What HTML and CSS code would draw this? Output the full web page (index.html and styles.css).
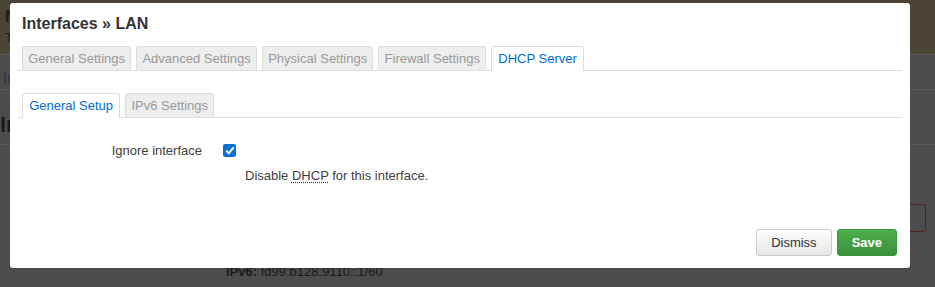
FILE: index.html
```html
<!DOCTYPE html>
<html lang="en">
<head>
    <meta charset="UTF-8">
    <title>Interfaces - LAN</title>
    <link rel="stylesheet" href="styles.css">
</head>
<body>
    <div class="page">
        <div class="alert">
            <h4>No password set!</h4>
            <p>There is no password set on this router.</p>
        </div>
        <div class="crumbs"><a href="#">Interfaces</a></div>
        <div class="page-title">Interfaces</div>
        <div class="page-body">
            <div class="red-box"></div>
            <div class="addr"><strong>IPv6:</strong> fd99:b128:9110::1/60</div>
        </div>
    </div>

    <div class="modal-overlay">
        <div class="modal">
            <h4 class="modal-title">Interfaces &raquo; LAN</h4>

            <ul class="tabs">
                <li class="tab">General Settings</li>
                <li class="tab">Advanced Settings</li>
                <li class="tab">Physical Settings</li>
                <li class="tab">Firewall Settings</li>
                <li class="tab active">DHCP Server</li>
            </ul>

            <ul class="tabs sub">
                <li class="tab active">General Setup</li>
                <li class="tab">IPv6 Settings</li>
            </ul>

            <div class="form-row">
                <label class="form-label">Ignore interface</label>
                <div class="form-field">
                    <span class="check">
                        <svg width="10" height="9" viewBox="0 0 10 9"><path d="M1.2 4.6 L3.8 7.2 L8.8 1.4" fill="none" stroke="#fff" stroke-width="2"/></svg>
                    </span>
                </div>
            </div>
            <div class="form-desc">Disable <abbr title="Dynamic Host Configuration Protocol">DHCP</abbr> for this interface.</div>

            <div class="modal-actions">
                <button class="btn">Dismiss</button>
                <button class="btn btn-save">Save</button>
            </div>
        </div>
    </div>
</body>
</html>
```

FILE: styles.css
```css
body {
    margin: 0;
    font-family: "Liberation Sans", Arial, sans-serif;
    font-size: 13px;
    background: #4c4c4c;
    width: 935px;
    height: 287px;
    overflow: hidden;
    position: relative;
}

/* dimmed page behind the dialog */
.page { color: #1b1b1b; }
.alert {
    height: 55px;
    background: #4a4535;
    padding: 7px 5px 0;
    box-sizing: border-box;
    border-bottom: 1px solid #5a5a5a;
}
.alert h4 { margin: 0; font-size: 17px; line-height: 20px; }
.alert p { margin: 3px 0 0; font-size: 13px; }
.crumbs {
    height: 35px;
    padding: 15px 0 0 3px;
    box-sizing: border-box;
    border-bottom: 1px solid #5a5a5a;
    font-size: 14px;
}
.crumbs a { color: #1d3550; text-decoration: none; }
.page-title {
    height: 55px;
    padding: 22px 0 0 0;
    box-sizing: border-box;
    border-bottom: 1px solid #5a5a5a;
    font-size: 22px;
    font-weight: bold;
}
.page-body { position: relative; height: 142px; }
.red-box {
    position: absolute;
    left: 880px;
    top: 59px;
    width: 44px;
    height: 26px;
    border: 1px solid #5c1d1d;
    border-radius: 3px;
}
.addr {
    position: absolute;
    left: 226px;
    top: 119px;
    font-size: 13px;
    color: #1a1a1a;
}

/* dialog */
.modal-overlay {
    position: absolute;
    inset: 0;
}
.modal {
    position: absolute;
    left: 10px;
    top: 3px;
    width: 900px;
    height: 265px;
    background: #fff;
    border-radius: 3px;
    padding: 12px 8px 0 8px;
    box-sizing: border-box;
    color: #404040;
}
.modal-title {
    margin: 0 0 13px 4px;
    font-size: 16px;
    line-height: 18px;
    font-weight: bold;
    color: #333;
}

.tabs {
    list-style: none;
    margin: 0;
    padding: 0 0 0 4px;
    display: flex;
    gap: 5px;
    border-bottom: 1px solid #ddd;
}
.tab {
    padding: 0 5.2px;
    height: 23px;
    line-height: 24px;
    background: #eee;
    color: #9a9a9a;
    border: 1px solid #ddd;
    border-bottom: none;
    border-radius: 3px 3px 0 0;
    margin-bottom: -1px;
}
.tab.active {
    background: #fff;
    color: #0069d6;
    height: 24px;
    padding: 0 6.2px;
}
.tabs.sub { margin-top: 22px; }

.form-row {
    display: flex;
    align-items: center;
    margin-top: 25px;
}
.form-label {
    width: 184px;
    text-align: right;
    color: #404040;
}
.form-field { padding-left: 21px; }
.check {
    display: flex;
    align-items: center;
    justify-content: center;
    width: 13px;
    height: 13px;
    background: #0b6fd6;
    border-radius: 2px;
}
.form-desc {
    margin: 10px 0 0 227px;
    color: #404040;
}
abbr {
    text-decoration: underline dotted #404040;
    text-underline-offset: 2px;
}

.modal-actions {
    display: flex;
    justify-content: flex-end;
    gap: 5px;
    margin: 46px 5px 0 0;
}
.btn {
    font-family: inherit;
    font-size: 13px;
    height: 27px;
    padding: 0 14px;
    border: 1px solid #ccc;
    border-radius: 3px;
    background: linear-gradient(#fff, #e6e6e6);
    color: #333;
}
.btn-save {
    background: linear-gradient(#4cae4c, #3a913a);
    border-color: #3c963c;
    color: #fff;
    font-weight: bold;
    padding: 0 14px;
}
```
